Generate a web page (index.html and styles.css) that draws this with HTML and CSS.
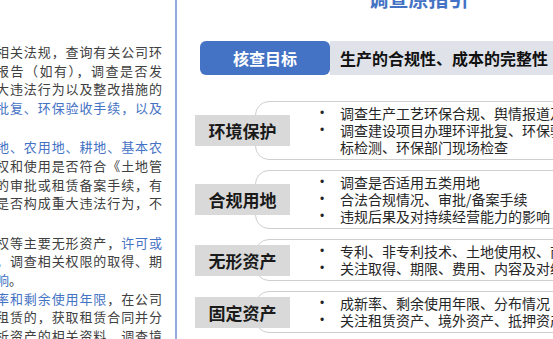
FILE: index.html
```html
<!DOCTYPE html>
<html lang="zh-CN">
<head>
<meta charset="utf-8">
<title>调查原指引</title>
<link rel="stylesheet" href="styles.css">
</head>
<body>
<div class="page">
  <section class="doc">
    <div class="doc-inner">
      <div class="para">
        <div class="ln">相关法规，查询有关公司环</div>
        <div class="ln">报告（如有），调查是否发</div>
        <div class="ln">大违法行为以及整改措施的</div>
        <div class="ln hl">批复、环保验收手续，以及</div>
      </div>
      <div class="para">
        <div class="ln hl">地、农用地、耕地、基本农</div>
        <div class="ln">权和使用是否符合《土地管</div>
        <div class="ln">的审批或租赁备案手续，有</div>
        <div class="ln">是否构成重大违法行为，不</div>
      </div>
      <div class="para">
        <div class="ln">权等主要无形资产，<span class="hl">许可或</span></div>
        <div class="ln">，调查相关权限的取得、期</div>
        <div class="ln last"><span class="hl">响</span>。</div>
      </div>
      <div class="para cont">
        <div class="ln"><span class="hl">率和剩余使用年限</span>，在公司</div>
        <div class="ln">租赁的，获取租赁合同并分</div>
        <div class="ln">析资产的相关资料，调查境</div>
      </div>
    </div>
  </section>
  <div class="divider"></div>
  <section class="guide">
    <h1 class="title">调查原指引</h1>
    <div class="goal">
      <div class="goal-tag">核查目标</div>
      <div class="goal-text">生产的合规性、成本的完整性</div>
    </div>
    <div class="rows">
      <div class="row">
        <div class="tag">环境保护</div>
        <div class="box">
          <ul>
            <li><span class="dot">•</span><span class="txt">调查生产工艺环保合规、舆情报道及处罚情况</span></li>
            <li><span class="dot">•</span><span class="txt">调查建设项目办理环评批复、环保验收手续、达标检测、环保部门现场检查</span></li>
          </ul>
        </div>
      </div>
      <div class="row">
        <div class="tag">合规用地</div>
        <div class="box">
          <ul>
            <li><span class="dot">•</span><span class="txt">调查是否适用五类用地</span></li>
            <li><span class="dot">•</span><span class="txt">合法合规情况、审批/备案手续</span></li>
            <li><span class="dot">•</span><span class="txt">违规后果及对持续经营能力的影响</span></li>
          </ul>
        </div>
      </div>
      <div class="row">
        <div class="tag">无形资产</div>
        <div class="box">
          <ul>
            <li><span class="dot">•</span><span class="txt">专利、非专利技术、土地使用权、商标权等</span></li>
            <li><span class="dot">•</span><span class="txt">关注取得、期限、费用、内容及对经营影响</span></li>
          </ul>
        </div>
      </div>
      <div class="row">
        <div class="tag">固定资产</div>
        <div class="box">
          <ul>
            <li><span class="dot">•</span><span class="txt">成新率、剩余使用年限、分布情况</span></li>
            <li><span class="dot">•</span><span class="txt">关注租赁资产、境外资产、抵押资产</span></li>
          </ul>
        </div>
      </div>
    </div>
  </section>
</div>
</body>
</html>
```

FILE: styles.css
```css
html, body {
  margin: 0;
  padding: 0;
  background: #ffffff;
}

body {
  width: 553px;
  height: 339px;
  overflow: hidden;
}

.page {
  display: flex;
  width: 700px;
  height: 339px;
}

/* left document column */
.doc {
  flex: none;
  width: 175px;
  height: 339px;
  overflow: hidden;
  box-sizing: border-box;
  padding-top: 43px;
  font-family: "Noto Sans CJK SC", sans-serif;
  font-size: 13px;
  line-height: 18.6px;
  color: #404040;
}

.doc-inner {
  margin-left: -4px;
  width: 166px;
}

.para + .para {
  margin-top: 21px;
}

.para.cont {
  margin-top: 0;
}

.ln {
  text-align: justify;
  text-align-last: justify;
}

.ln.last {
  text-align-last: left;
}

.hl {
  color: #4472c4;
}

.divider {
  flex: none;
  width: 2px;
  height: 339px;
  background: #94ace0;
}

/* right guide panel */
.guide {
  flex: none;
  width: 483px;
  font-family: "Noto Sans CJK SC", sans-serif;
}

.title {
  margin: -13px 0 0;
  text-align: center;
  font-size: 20px;
  line-height: 24px;
  font-weight: 700;
  color: #4472c4;
}

.goal {
  display: flex;
  height: 34px;
  margin: 30px 0 0 23px;
}

.goal-tag {
  flex: none;
  width: 130px;
  border-radius: 6px;
  background: #4472c4;
  color: #ffffff;
  font-size: 16px;
  font-weight: 700;
  display: flex;
  align-items: center;
  justify-content: center;
}

.goal-text {
  flex: 1;
  background: #dfe2e9;
  color: #111111;
  font-size: 16px;
  font-weight: 700;
  display: flex;
  align-items: center;
  padding-left: 10px;
}

.rows {
  margin: 26px 0 0 18px;
  display: flex;
  flex-direction: column;
  gap: 10px;
}

.row {
  display: flex;
  align-items: center;
}

.tag {
  flex: none;
  width: 95px;
  height: 31px;
  margin-right: -35px;
  position: relative;
  z-index: 1;
  background: #d9d9d9;
  color: #1a1a1a;
  font-size: 17px;
  font-weight: 700;
  display: flex;
  align-items: center;
  justify-content: center;
}

.box {
  flex: 1;
  border: 1px solid #cfcfcf;
  border-radius: 14px;
  padding: 3px 0 3px 64px;
}

.box ul {
  list-style: none;
  margin: 0;
  padding: 0;
  font-size: 14px;
  line-height: 17px;
  color: #262626;
}

.box li {
  display: flex;
}

.dot {
  flex: none;
  width: 20px;
  font-family: "Liberation Sans", sans-serif;
  font-size: 12px;
}

.txt {
  width: 300px;
}
```
